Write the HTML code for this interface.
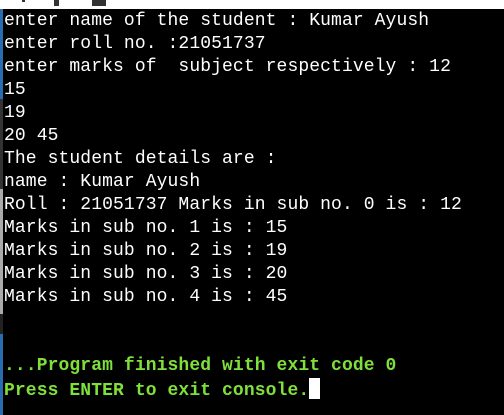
<!DOCTYPE html>
<html><head><meta charset="utf-8"><style>
html,body{margin:0;padding:0;background:#000;width:504px;height:415px;overflow:hidden}
.top{position:absolute;left:0;top:0;width:504px;height:9px;background:#fff}
.top i{position:absolute;top:0;height:6px;background:#333}
.side{position:absolute;left:0;width:3px}
pre{position:absolute;left:4px;top:10px;margin:0;font-family:"Liberation Mono",monospace;font-size:18px;line-height:23px;color:#fff;letter-spacing:0.1px}
.g{color:#7fe03a;font-weight:bold}
.cur{display:inline-block;width:11px;height:21px;background:#fff;vertical-align:-4px}
</style></head><body>
<div class="top"><i style="left:22px;width:3px;height:2px"></i><i style="left:54px;width:5px"></i><i style="left:92px;width:14px"></i></div>
<div class="side" style="top:9px;height:90px;background:#2a6cb0"></div>
<div class="side" style="top:99px;height:90px;background:#333"></div>
<div class="side" style="top:189px;height:125px;background:#aaa"></div>
<div class="side" style="top:314px;height:20px;background:#222"></div>
<div class="side" style="top:334px;height:81px;background:#2a6cb0"></div>
<pre>enter name of the student : Kumar Ayush
enter roll no. :21051737
enter marks of  subject respectively : 12
15
19
20 45
The student details are :
name : Kumar Ayush
Roll : 21051737 Marks in sub no. 0 is : 12
Marks in sub no. 1 is : 15
Marks in sub no. 2 is : 19
Marks in sub no. 3 is : 20
Marks in sub no. 4 is : 45


<span class="g">...Program finished with exit code 0
Press ENTER to exit console.</span><span class="cur"></span></pre>
</body></html>
